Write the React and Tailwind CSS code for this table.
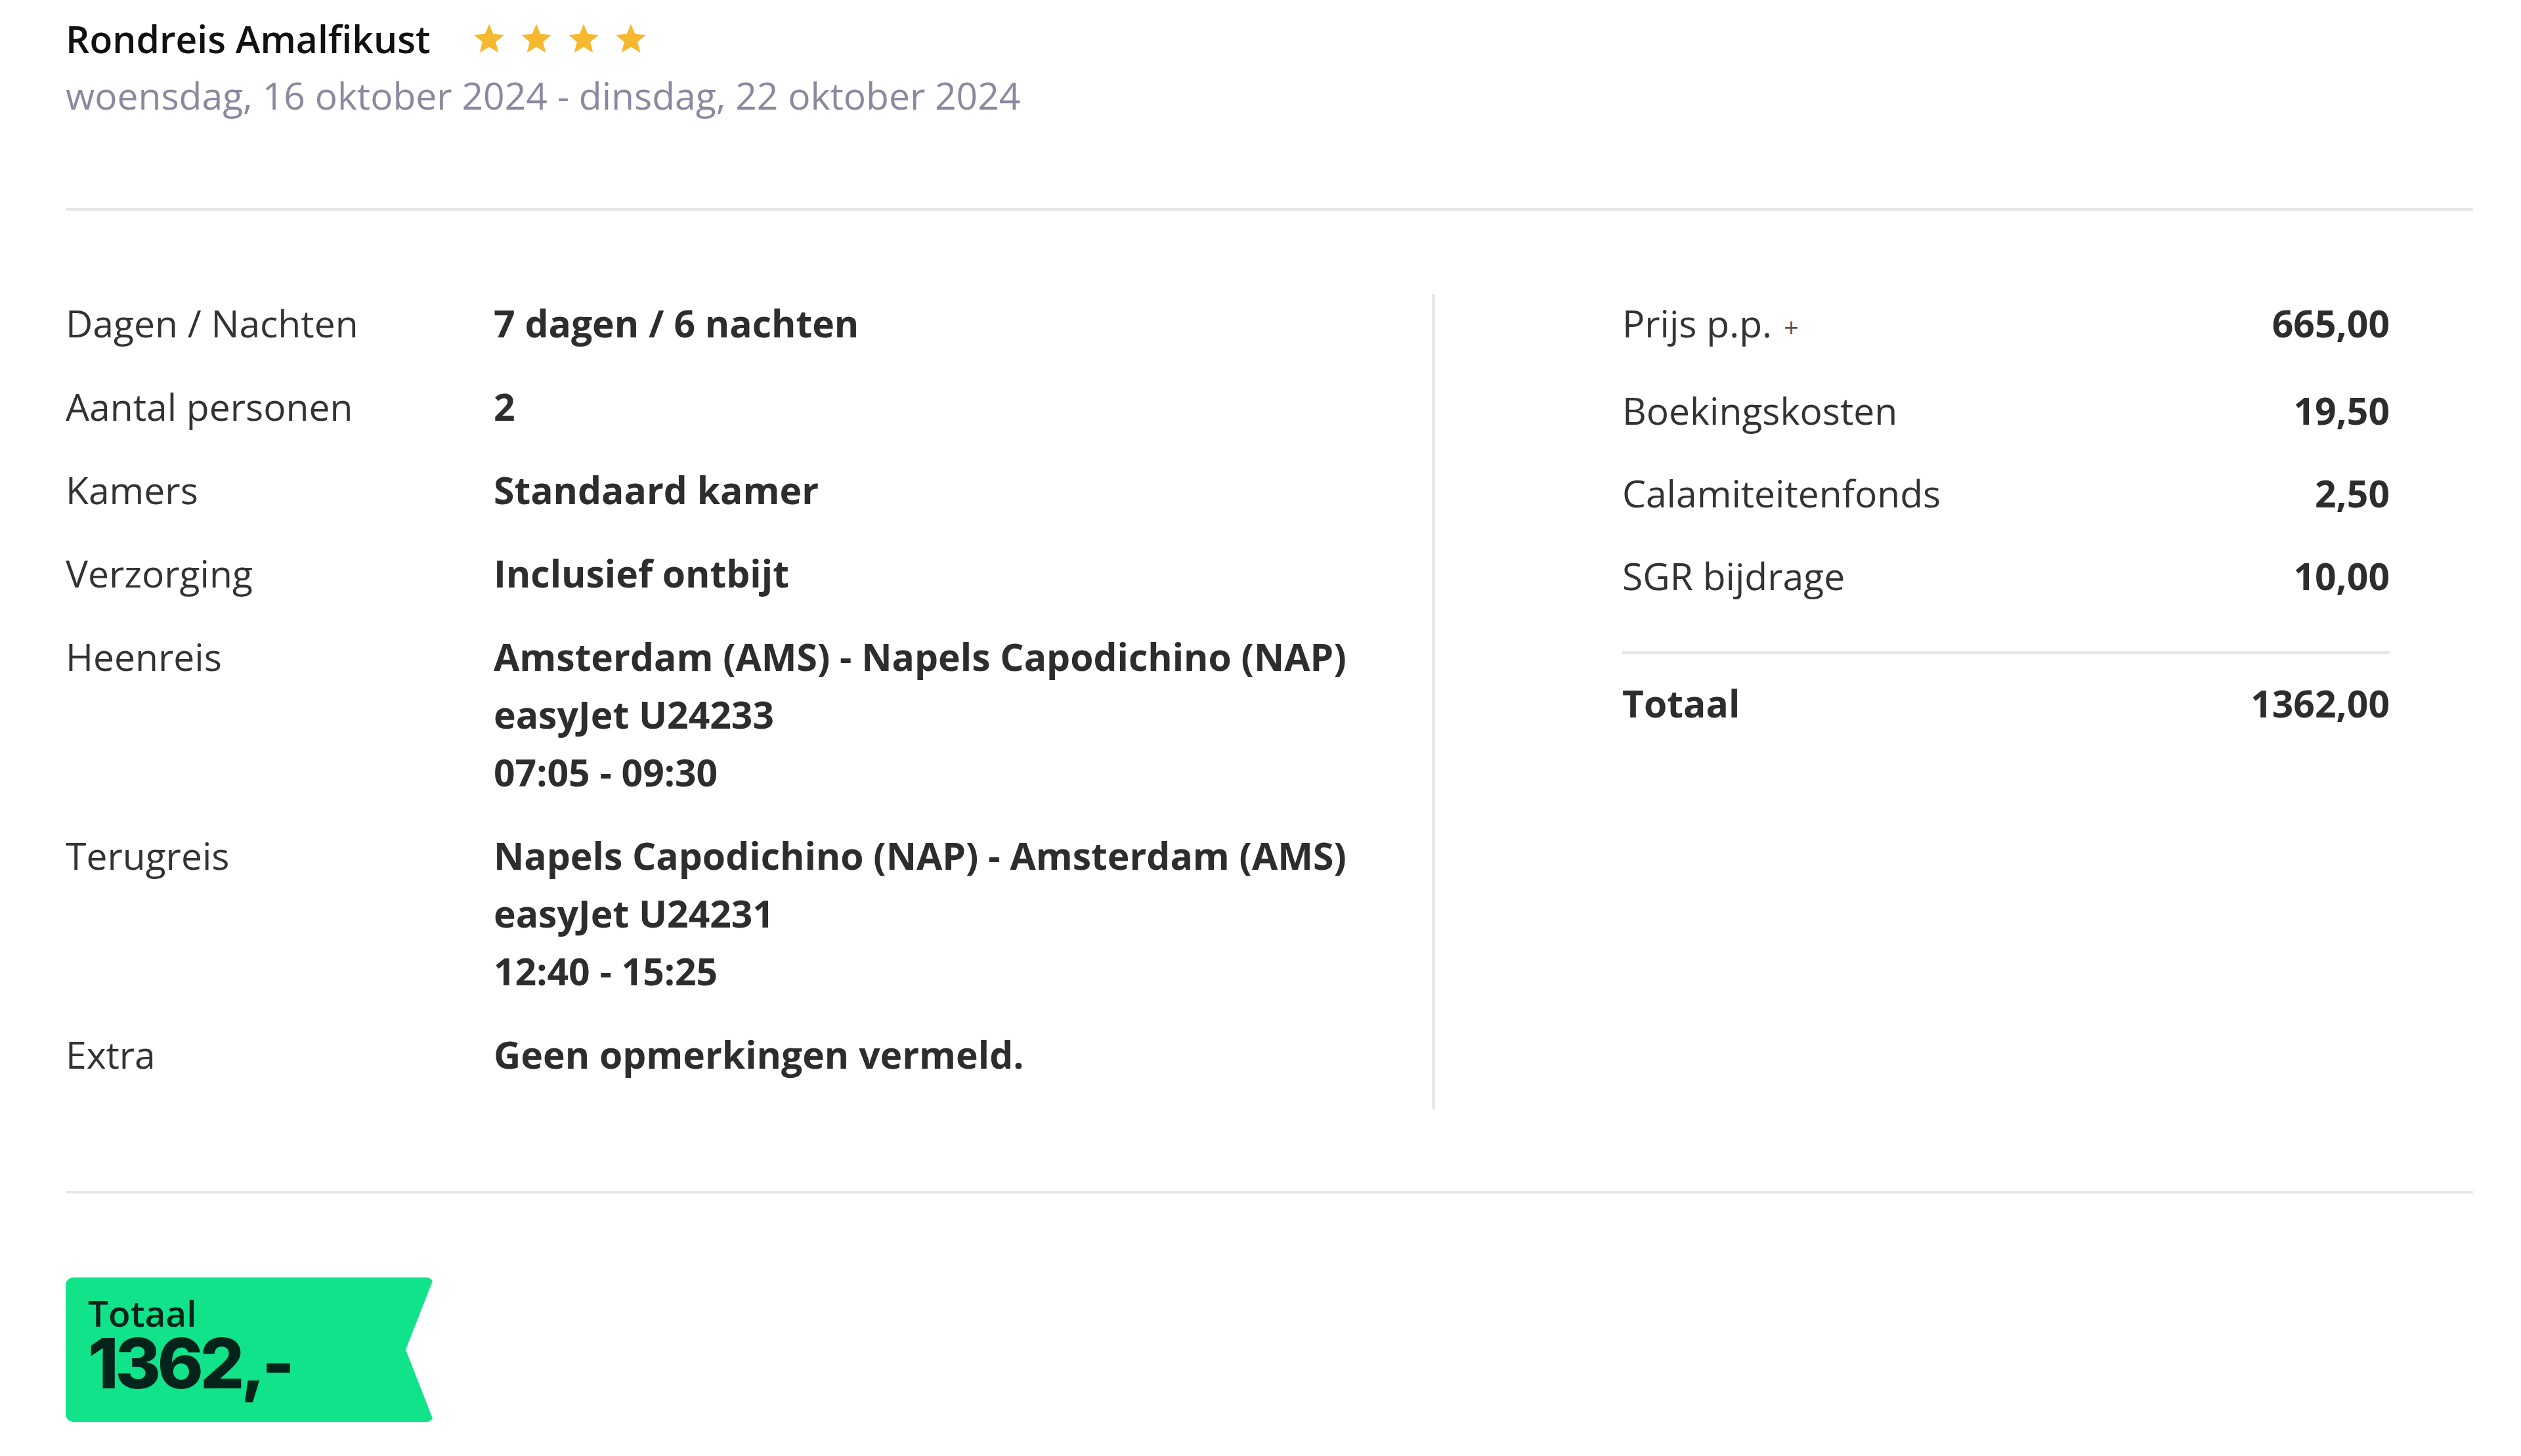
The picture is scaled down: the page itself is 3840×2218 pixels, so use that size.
const details = [
  { label: 'Dagen / Nachten', lines: ['7 dagen / 6 nachten'] },
  { label: 'Aantal personen', lines: ['2'] },
  { label: 'Kamers', lines: ['Standaard kamer'] },
  { label: 'Verzorging', lines: ['Inclusief ontbijt'] },
  {
    label: 'Heenreis',
    lines: ['Amsterdam (AMS) - Napels Capodichino (NAP)', 'easyJet U24233', '07:05 - 09:30'],
  },
  {
    label: 'Terugreis',
    lines: ['Napels Capodichino (NAP) - Amsterdam (AMS)', 'easyJet U24231', '12:40 - 15:25'],
  },
  { label: 'Extra', lines: ['Geen opmerkingen vermeld.'] },
]

const costs = [
  { label: 'Prijs p.p.', value: '665,00', plus: true, gap: 'mb-[45px]' },
  { label: 'Boekingskosten', value: '19,50', gap: 'mb-[38px]' },
  { label: 'Calamiteitenfonds', value: '2,50', gap: 'mb-[38px]' },
  { label: 'SGR bijdrage', value: '10,00', gap: '' },
]

function Star() {
  return (
    <svg viewBox="0 0 24 24" className="h-[52px] w-[52px]">
      <polygon
        fill="#f6b82e"
        points="12,1.6 14.9,8.7 22.6,9.3 16.7,14.3 18.6,21.8 12,17.8 5.4,21.8 7.3,14.3 1.4,9.3 9.1,8.7"
      />
    </svg>
  )
}

export default function App() {
  return (
    <div className="min-h-screen bg-white font-['Open_Sans',sans-serif] text-[#333]">
      <div className="pl-[100px] pr-[73px] pt-[15px]">
        <div className="flex items-center">
          <h1 className="text-[57px] font-semibold leading-[88px] text-[#111]">Rondreis Amalfikust</h1>
          <div className="ml-[64px] flex items-center gap-[20px]">
            <Star />
            <Star />
            <Star />
            <Star />
          </div>
        </div>
        <p className="-mt-[2px] text-[57px] leading-[88px] text-[#8a89a0]">
          woensdag, 16 oktober 2024 - dinsdag, 22 oktober 2024
        </p>

        <div className="mt-[128px] h-[4px] bg-[#e6e6e6]" />

        <div className="mt-[127px] flex text-[57px] leading-[88px]">
          <div className="w-[2081px]">
            {details.map((row) => (
              <div key={row.label} className="grid grid-cols-[652px_1fr] pb-[39px]">
                <div>{row.label}</div>
                <div className="font-bold text-[#2d2d2d]">
                  {row.lines.map((line) => (
                    <div key={line}>{line}</div>
                  ))}
                </div>
              </div>
            ))}
          </div>

          <div className="flex-1 border-l-[5px] border-[#e8e8e8] pl-[285px] pr-[127px]">
            {costs.map((c) => (
              <div key={c.label} className={`flex h-[88px] justify-between ${c.gap}`}>
                <div>
                  {c.label}
                  {c.plus && <span className="ml-[18px] text-[40px] leading-none text-[#555]">+</span>}
                </div>
                <div className="font-bold text-[#2d2d2d]">{c.value}</div>
              </div>
            ))}
            <div className="mt-[71px] h-[4px] bg-[#e6e6e6]" />
            <div className="mt-[31px] flex justify-between font-bold text-[#2d2d2d]">
              <div>Totaal</div>
              <div>1362,00</div>
            </div>
          </div>
        </div>

        <div className="mt-[125px] h-[4px] bg-[#e6e6e6]" />

        <div className="mt-[128px] flex h-[220px] w-[561px] flex-col rounded-[12px] bg-[#10e38a] pl-[34px] pt-[30px] text-[#04231a] [clip-path:polygon(0_0,100%_0,518px_50%,100%_100%,0_100%)]">
          <div className="text-[55px] font-semibold leading-[48px]">Totaal</div>
          <div className="mt-[11px] font-['Inter',sans-serif] text-[106px] font-extrabold leading-[84px] tracking-[-0.05em]">
            1362,-
          </div>
        </div>
      </div>
    </div>
  )
}
